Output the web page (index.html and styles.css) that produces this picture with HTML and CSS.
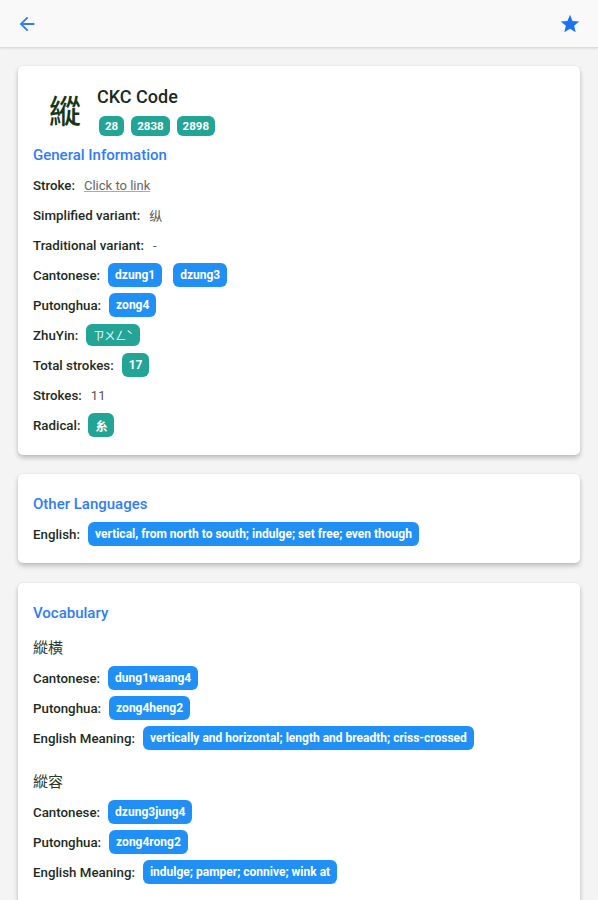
FILE: index.html
```html
<!DOCTYPE html>
<html lang="zh-Hant">
<head>
<meta charset="utf-8">
<link rel="stylesheet" href="styles.css">
</head>
<body>
<header class="topbar">
  <svg class="icon back" viewBox="0 0 24 24" width="22" height="22"><path d="M20 11H7.83l5.59-5.59L12 4l-8 8 8 8 1.41-1.41L7.83 13H20v-2z" fill="#2f7df6"/></svg>
  <svg class="icon star" viewBox="0 0 24 24" width="22" height="22"><path d="M12 17.27L18.18 21l-1.64-7.03L22 9.24l-7.19-.61L12 2 9.19 8.63 2 9.24l5.46 4.73L5.82 21z" fill="#1a73f0"/></svg>
</header>

<main class="content">
  <section class="card">
    <div class="hero">
      <div class="bigchar">縱</div>
      <div class="hero-info">
        <div class="hero-title">CKC Code</div>
        <div class="chips">
          <span class="chip teal small">28</span>
          <span class="chip teal small">2838</span>
          <span class="chip teal small">2898</span>
        </div>
      </div>
    </div>
    <h2 class="section-title">General Information</h2>
    <div class="row"><span class="label">Stroke:</span><span class="value link">Click to link</span></div>
    <div class="row"><span class="label">Simplified variant:</span><span class="value">纵</span></div>
    <div class="row"><span class="label">Traditional variant:</span><span class="value">-</span></div>
    <div class="row"><span class="label">Cantonese:</span><span class="chip blue">dzung1</span><span class="chip blue">dzung3</span></div>
    <div class="row"><span class="label">Putonghua:</span><span class="chip blue">zong4</span></div>
    <div class="row"><span class="label">ZhuYin:</span><span class="chip teal zhuyin">ㄗㄨㄥˋ</span></div>
    <div class="row"><span class="label">Total strokes:</span><span class="chip teal">17</span></div>
    <div class="row"><span class="label">Strokes:</span><span class="value">11</span></div>
    <div class="row"><span class="label">Radical:</span><span class="chip teal">糸</span></div>
  </section>

  <section class="card card-lang">
    <h2 class="section-title">Other Languages</h2>
    <div class="row"><span class="label">English:</span><span class="chip blue">vertical, from north to south; indulge; set free; even though</span></div>
  </section>

  <section class="card card-vocab">
    <h2 class="section-title">Vocabulary</h2>
    <div class="vocab">
      <div class="word">縱橫</div>
      <div class="row"><span class="label">Cantonese:</span><span class="chip blue">dung1waang4</span></div>
      <div class="row"><span class="label">Putonghua:</span><span class="chip blue">zong4heng2</span></div>
      <div class="row"><span class="label">English Meaning:</span><span class="chip blue">vertically and horizontal; length and breadth; criss-crossed</span></div>
    </div>
    <div class="vocab">
      <div class="word">縱容</div>
      <div class="row"><span class="label">Cantonese:</span><span class="chip blue">dzung3jung4</span></div>
      <div class="row"><span class="label">Putonghua:</span><span class="chip blue">zong4rong2</span></div>
      <div class="row"><span class="label">English Meaning:</span><span class="chip blue">indulge; pamper; connive; wink at</span></div>
    </div>
  </section>
</main>
</body>
</html>
```

FILE: styles.css
```css
* { box-sizing: border-box; }
html, body { margin: 0; padding: 0; }
body {
  width: 598px;
  height: 900px;
  overflow: hidden;
  background: #f4f4f4;
  font-family: Roboto, "Noto Sans CJK TC", sans-serif;
  color: #1d2b1d;
}
.topbar {
  height: 48px;
  background: #f9f9f9;
  border-bottom: 1px solid #dcdcdc;
  box-shadow: 0 1px 2px rgba(0,0,0,0.08);
  display: flex;
  align-items: center;
  justify-content: space-between;
  padding: 0 17px 0 16px;
}
.icon { display: block; }
.content {
  padding: 18px 18px 0 18px;
  display: flex;
  flex-direction: column;
  gap: 19px;
}
.card {
  background: #fff;
  border-radius: 5px;
  box-shadow: 0 3px 5px rgba(0,0,0,0.22), 0 0 2px rgba(0,0,0,0.08);
  padding: 20px 15px 15px 15px;
}
.card-lang { padding: 15px 15px 14px 15px; }
.card-vocab { padding: 15px 15px 20px 15px; margin-top: 1px; }
.hero {
  display: flex;
  height: 54px;
}
.bigchar {
  width: 64px;
  text-align: center;
  font-family: "Noto Sans CJK TC", sans-serif;
  font-size: 32px;
  font-weight: 500;
  line-height: 32px;
  padding-top: 7px;
  color: #16361a;
}
.hero-info {
  display: flex;
  flex-direction: column;
  gap: 8px;
}
.hero-title {
  font-size: 18px;
  line-height: 22px;
  font-weight: 500;
  color: #1b2a1b;
}
.chips { display: flex; gap: 7px; margin-left: 2px; }
.section-title {
  margin: 0;
  height: 30px;
  line-height: 30px;
  font-size: 15px;
  font-weight: 500;
  color: #2f7df6;
}
.row {
  height: 30px;
  display: flex;
  align-items: center;
  gap: 8px;
}
.row .chip + .chip { margin-left: 3px; }
.label {
  font-size: 13.3px;
  font-weight: 500;
  color: #1d2b1d;
}
.value {
  font-size: 13px;
  color: #555;
  margin-left: 1px;
}
.value.link {
  text-decoration: underline;
  text-decoration-color: #aaa;
  color: #666;
}
.chip {
  display: inline-flex;
  align-items: center;
  height: 24px;
  padding: 0 7px;
  border-radius: 6px;
  color: #fff;
  font-size: 12px;
  font-weight: 700;
  white-space: nowrap;
}
.chip.small { height: 20px; padding: 0 6px; font-size: 11.5px; }
.chip.blue { background: #2190f6; }
.chip.teal { background: #22a597; }
.chip.zhuyin { font-weight: 400; font-size: 11px; font-family: "Noto Sans CJK TC", sans-serif; height: 22px; }
.vocab { padding-top: 2px; }
.vocab + .vocab { padding-top: 11px; }
.word {
  height: 33px;
  line-height: 33px;
  font-size: 15px;
  font-family: "Noto Sans CJK TC", sans-serif;
  color: #2a3a2a;
}
```
